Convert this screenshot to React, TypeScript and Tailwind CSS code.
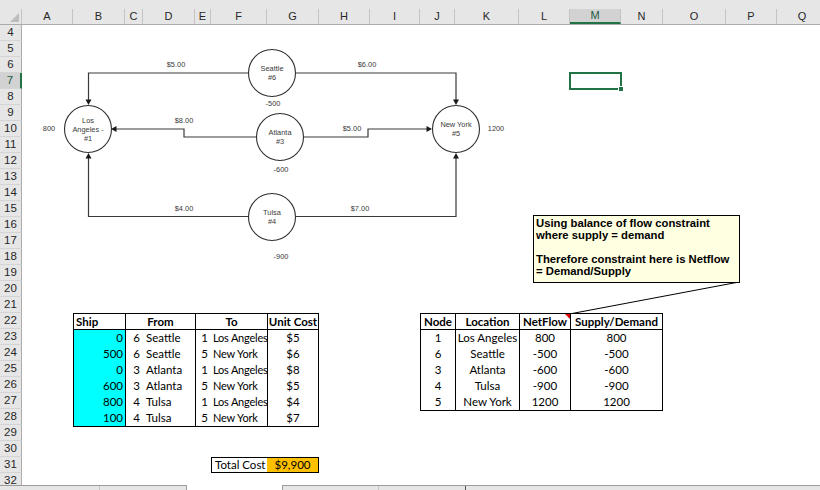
import React from "react";

type Col = { label: string; width: string; active?: boolean };

const columns: Col[] = [
  { label: "A", width: "w-[51px]" },
  { label: "B", width: "w-[52px]" },
  { label: "C", width: "w-[18px]" },
  { label: "D", width: "w-[52px]" },
  { label: "E", width: "w-[16px]" },
  { label: "F", width: "w-[56px]" },
  { label: "G", width: "w-[52px]" },
  { label: "H", width: "w-[51px]" },
  { label: "I", width: "w-[50px]" },
  { label: "J", width: "w-[35px]" },
  { label: "K", width: "w-[64px]" },
  { label: "L", width: "w-[51px]" },
  { label: "M", width: "w-[51px]", active: true },
  { label: "N", width: "w-[42px]" },
  { label: "O", width: "w-[63px]" },
  { label: "P", width: "w-[51px]" },
  { label: "Q", width: "w-[51px]" },
];

const rowNumbers: number[] = Array.from({ length: 29 }, (_, i) => i + 4);

const shipments = [
  { ship: 0, fromId: 6, from: "Seattle", toId: 1, to: "Los Angeles", cost: "$5" },
  { ship: 500, fromId: 6, from: "Seattle", toId: 5, to: "New York", cost: "$6" },
  { ship: 0, fromId: 3, from: "Atlanta", toId: 1, to: "Los Angeles", cost: "$8" },
  { ship: 600, fromId: 3, from: "Atlanta", toId: 5, to: "New York", cost: "$5" },
  { ship: 800, fromId: 4, from: "Tulsa", toId: 1, to: "Los Angeles", cost: "$4" },
  { ship: 100, fromId: 4, from: "Tulsa", toId: 5, to: "New York", cost: "$7" },
];

const nodes = [
  { node: 1, location: "Los Angeles", netFlow: 800, supply: 800 },
  { node: 6, location: "Seattle", netFlow: -500, supply: -500 },
  { node: 3, location: "Atlanta", netFlow: -600, supply: -600 },
  { node: 4, location: "Tulsa", netFlow: -900, supply: -900 },
  { node: 5, location: "New York", netFlow: 1200, supply: 1200 },
];

// network diagram (floating shape on top of the sheet)
const circles = [
  { cx: 272, cy: 73, lines: ["Seattle", "#6"] },
  { cx: 88, cy: 129, lines: ["Los", "Angeles -", "#1"] },
  { cx: 280, cy: 137, lines: ["Atlanta", "#3"] },
  { cx: 272, cy: 217, lines: ["Tulsa", "#4"] },
  { cx: 456, cy: 129, lines: ["New York", "#5"] },
];

const labels = [
  { x: 176, y: 64, text: "$5.00" },
  { x: 367, y: 64, text: "$6.00" },
  { x: 184, y: 120, text: "$8.00" },
  { x: 352, y: 128, text: "$5.00" },
  { x: 184, y: 208, text: "$4.00" },
  { x: 360, y: 208, text: "$7.00" },
  { x: 273, y: 103, text: "-500" },
  { x: 281, y: 169, text: "-600" },
  { x: 281, y: 256, text: "-900" },
  { x: 49, y: 128, text: "800" },
  { x: 496, y: 128, text: "1200" },
];

const edges = [
  "M248,73 H88.5 V100",
  "M296,73 H456 V100",
  "M256,137 H184 V129 H116",
  "M304,137 H368 V129 H427",
  "M248,216.5 H88.5 V158",
  "M296,216.5 H456 V158",
];

const arrows = [
  "85.5,99.5 91.5,99.5 88.5,105",
  "453,99.5 459,99.5 456,105",
  "111,129 116.5,126 116.5,132",
  "432,129 426.5,126 426.5,132",
  "88.5,153 85.5,158.5 91.5,158.5",
  "456,153 453,158.5 459,158.5",
];

function Diagram() {
  return (
    <svg className="absolute left-0 top-0 pointer-events-none" width={820} height={490}>
      {edges.map((d, i) => (
        <path key={i} d={d} fill="none" stroke="#3a3a3a" strokeWidth={1.2} />
      ))}
      {arrows.map((p, i) => (
        <polygon key={i} points={p} fill="#1a1a1a" />
      ))}
      {circles.map((c, i) => (
        <g key={i}>
          <circle cx={c.cx} cy={c.cy} r={23.5} fill="#fff" stroke="#2e2e2e" strokeWidth={1.1} />
          {c.lines.map((t, j) => (
            <text
              key={j}
              x={c.cx}
              y={c.cy - 4.5 * (c.lines.length - 1) + j * 9 + 2.6}
              textAnchor="middle"
              fontFamily="Liberation Sans, Arial, sans-serif"
              fontSize={7.4}
              fill="#3a3a3a"
            >
              {t}
            </text>
          ))}
        </g>
      ))}
      {labels.map((l, i) => (
        <text
          key={i}
          x={l.x}
          y={l.y + 2.6}
          textAnchor="middle"
          fontFamily="Liberation Sans, Arial, sans-serif"
          fontSize={7.4}
          fill="#3a3a3a"
        >
          {l.text}
        </text>
      ))}
      {/* comment pointer + red indicator on L22 */}
      <line x1={739} y1={282} x2={572} y2={313.5} stroke="#000" strokeWidth={1} />
      <polygon points="565,314 570,314 570,319" fill="#e00000" />
    </svg>
  );
}

function CommentBox() {
  return (
    <div className="absolute left-[533px] top-[215px] w-[207px] h-[68px] bg-[#ffffe1] border border-black px-[2px] pt-[1px] font-['Liberation_Sans',Arial,sans-serif] font-bold text-[11.3px] leading-[12px] text-black">
      <div>Using balance of flow constraint</div>
      <div>where supply = demand</div>
      <div className="h-[12px]" />
      <div>Therefore constraint here is Netflow</div>
      <div>= Demand/Supply</div>
    </div>
  );
}

function ShipTable() {
  return (
    <div className="col-start-2 col-span-6 row-start-19 row-span-7 self-start border border-black grid grid-cols-[51px_18px_52px_16px_56px_51px] auto-rows-[16px] leading-[16px]">
      <div className="font-bold pl-[2px] border-b border-black">Ship</div>
      <div className="col-span-2 font-bold text-center border-l border-b border-black">From</div>
      <div className="col-span-2 font-bold text-center border-l border-b border-black">To</div>
      <div className="font-bold text-center border-l border-b border-black whitespace-nowrap">Unit Cost</div>
      {shipments.map((s, i) => (
        <React.Fragment key={i}>
          <div className="bg-[#00ffff] text-right pr-[2px]">{s.ship}</div>
          <div className="border-l border-black text-right pr-[3px]">{s.fromId}</div>
          <div className="pl-[3px] whitespace-nowrap">{s.from}</div>
          <div className="border-l border-black text-right pr-[3px]">{s.toId}</div>
          <div className="pl-[2px] whitespace-nowrap text-[11px] tracking-[-0.2px]">{s.to}</div>
          <div className="border-l border-black text-center">{s.cost}</div>
        </React.Fragment>
      ))}
    </div>
  );
}

function NodeTable() {
  return (
    <div className="col-start-10 col-span-5 row-start-19 row-span-6 self-start border border-black grid grid-cols-[34px_64px_51px_92px] auto-rows-[16px] leading-[16px]">
      <div className="font-bold text-center border-b border-black">Node</div>
      <div className="font-bold text-center border-l border-b border-black">Location</div>
      <div className="font-bold text-center border-l border-b border-black">NetFlow</div>
      <div className="font-bold text-center border-l border-b border-black">Supply/Demand</div>
      {nodes.map((n) => (
        <React.Fragment key={n.node}>
          <div className="text-center">{n.node}</div>
          <div className="border-l border-black text-center whitespace-nowrap">{n.location}</div>
          <div className="border-l border-black text-center">{n.netFlow}</div>
          <div className="border-l border-black text-center">{n.supply}</div>
        </React.Fragment>
      ))}
    </div>
  );
}

export default function App() {
  return (
    <div className="relative w-[820px] h-[490px] overflow-hidden bg-white flex flex-col font-['Lato',sans-serif] text-[11.5px] text-black">
      {/* column headers */}
      <div className="flex items-end h-[25px] shrink-0 bg-[#e6e6e6] border-b border-[#ababab] font-['Liberation_Sans',Arial,sans-serif] text-[11px] text-[#262626]">
        <div className="w-[22px] h-[15px] shrink-0 border-r border-[#c4c4c4] flex items-end justify-end pr-[2px] pb-[2px]">
          <svg width={9} height={9}>
            <polygon points="9,0 9,9 0,9" fill="#bdbdbd" />
          </svg>
        </div>
        {columns.map((c) => (
          <div
            key={c.label}
            className={
              c.active
                ? `${c.width} shrink-0 h-[15px] border-r border-[#c4c4c4] border-b-2 border-b-[#217346] bg-[#d2d2d2] text-[#215a3f] flex items-center justify-center`
                : `${c.width} shrink-0 h-[15px] border-r border-[#c4c4c4] flex items-center justify-center`
            }
          >
            {c.label}
          </div>
        ))}
      </div>

      {/* body */}
      <div className="flex flex-1 overflow-hidden">
        <div className="w-[22px] shrink-0 flex flex-col bg-[#e6e6e6] font-['Liberation_Sans',Arial,sans-serif] text-[11.5px] text-[#262626]">
          {rowNumbers.map((n) => (
            <div
              key={n}
              className={
                n === 7
                  ? "h-[16px] shrink-0 border-b border-[#d4d4d4] border-r-2 border-r-[#217346] bg-[#d2d2d2] text-[#215a3f] flex items-center justify-center"
                  : "h-[16px] shrink-0 border-b border-[#d4d4d4] border-r border-r-[#ababab] flex items-center justify-center"
              }
            >
              {n}
            </div>
          ))}
        </div>

        <div className="grid grid-cols-[51px_52px_18px_52px_16px_56px_52px_51px_50px_35px_64px_51px_51px_42px_63px_51px_51px] grid-rows-[repeat(29,16px)] shrink-0">
          {/* selected cell M7 */}
          <div className="col-start-13 row-start-4 relative -m-[1px] border-2 border-[#217346]">
            <div className="absolute -right-[4px] -bottom-[4px] w-[6px] h-[6px] bg-[#217346] border border-white" />
          </div>

          <ShipTable />
          <NodeTable />

          {/* total cost */}
          <div className="col-start-6 col-span-2 row-start-28 flex border border-black leading-[14px]">
            <div className="w-[55px] pl-[3px] whitespace-nowrap">Total Cost</div>
            <div className="flex-1 bg-[#ffc000] text-center">$9,900</div>
          </div>
        </div>
      </div>

      {/* sheet tab / scroll bar strip */}
      <div className="flex h-[5px] shrink-0">
        <div className="w-[187px] bg-[#e6e6e6] border-t border-r border-[#9c9c9c] flex">
          <div className="w-[100px] border-r border-[#c4c4c4]" />
        </div>
        <div className="w-[95px] bg-white" />
        <div className="flex-1 bg-[#e6e6e6] border-t border-l border-[#9c9c9c] flex">
          <div className="w-[96px] border-r border-[#c4c4c4]" />
          <div className="w-[87px] border-r border-[#555]" />
        </div>
      </div>

      <Diagram />
      <CommentBox />
    </div>
  );
}
